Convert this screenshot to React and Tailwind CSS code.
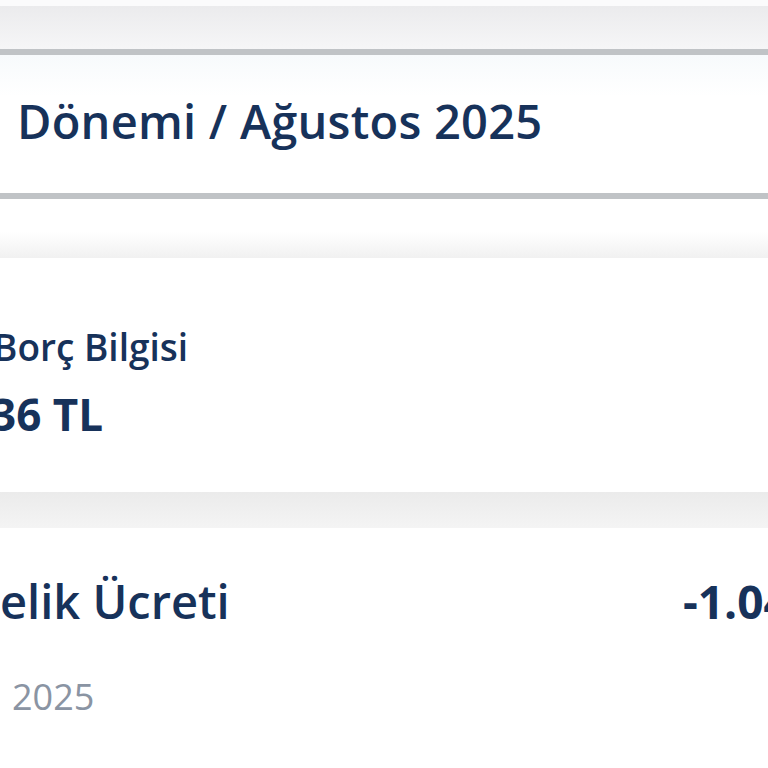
import React from "react";

const navy = "text-[#17325a]";

export default function App() {
  return (
    <div className="w-[768px] h-[768px] overflow-hidden bg-white font-['Open_Sans',sans-serif]">
      {/* top band */}
      <div className="h-[6px] bg-[#fbfbfc]" />
      <div className="h-[43px] bg-gradient-to-b from-[#ebebed] to-[#f6f6f7]" />
      <div className="h-[6px] bg-[#c0c3c6]" />

      {/* period card */}
      <div className="h-[138px] bg-gradient-to-b from-[#f7fafc] to-white to-[30%] pt-[43px]">
        <p className={`pl-[17px] text-[47px] font-semibold tracking-[0.005em] leading-none whitespace-nowrap ${navy}`}>
          Dönemi / Ağustos 2025
        </p>
      </div>
      <div className="h-[6px] bg-[#c0c3c6]" />

      {/* spacer band */}
      <div className="h-[59px] bg-gradient-to-b from-white from-[55%] to-[#f1f1f1]" />

      {/* debt card */}
      <div className="h-[234px] bg-white pt-[70px]">
        <p className={`-ml-[7px] text-[37px] font-semibold leading-none whitespace-nowrap ${navy}`}>
          Borç Bilgisi
        </p>
        <p className={`-ml-[9px] mt-[27px] text-[44px] font-bold leading-none whitespace-nowrap ${navy}`}>
          36 TL
        </p>
      </div>

      {/* divider band */}
      <div className="h-[36px] bg-gradient-to-b from-[#ebebeb] to-[#f4f4f4]" />

      {/* fee row */}
      <div className="bg-white pt-[50px]">
        <div className="flex items-baseline justify-between whitespace-nowrap">
          <p className={`text-[47px] font-semibold leading-none ${navy}`}>elik Ücreti</p>
          <p className={`w-[85px] overflow-hidden text-[46px] font-bold leading-none ${navy}`}>
            -1.045
          </p>
        </div>
        <p className="pl-[12px] mt-[54px] text-[36px] leading-none text-[#8a94a3]">2025</p>
      </div>
    </div>
  );
}
